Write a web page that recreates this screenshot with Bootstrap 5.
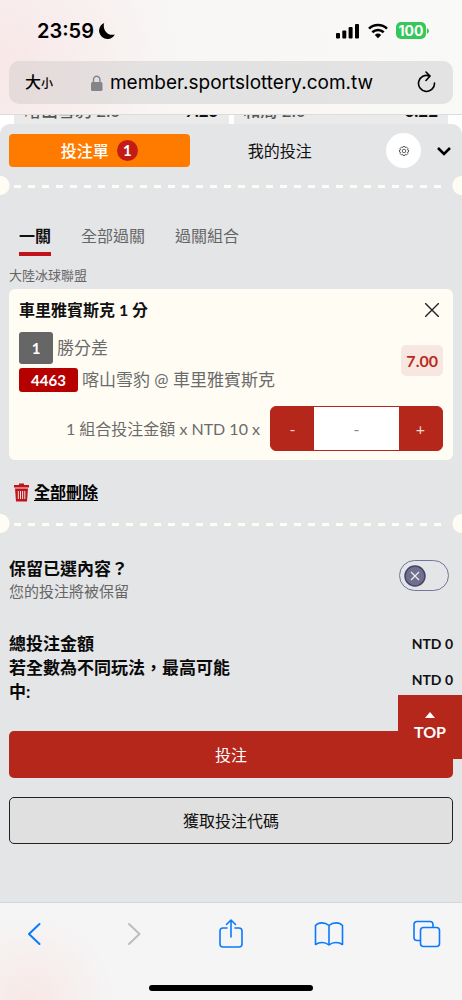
<!DOCTYPE html>
<html lang="zh-Hant">
<head>
<meta charset="utf-8">
<meta name="viewport" content="width=device-width, initial-scale=1">
<title>投注單</title>
<link rel="stylesheet" href="https://cdn.jsdelivr.net/npm/bootstrap@5.3.0/dist/css/bootstrap.min.css">
<style>
  :root { --cream:#fffdf3; --red:#b5261b; --gutter:9px; }
  body { font-family:Lato,"Noto Sans CJK TC",sans-serif; font-size:17px; line-height:24px; color:#111; background:#fff; }
  button, input { font-family:inherit; }
  svg { display:block; flex:none; }
  .bare { border:0; background:none; padding:0; color:inherit; }

  /* browser chrome */
  .chrome-top, .chrome-bottom { font-family:Inter,"Noto Sans CJK TC",sans-serif; color:#000; }
  .chrome-top { z-index:2; height:115px; border-bottom:1px solid #dcdcdc; background:radial-gradient(circle at 0 62px,#f8e7e7 0,#f8f6f5 170px,#f9f9f8 100%); }
  .status { height:61px; padding:0 33px 0 37px; }
  .clock { font-size:20px; font-weight:600; }
  .battery { width:30px; height:17px; border-radius:5px; background:#34c759; color:#fff; font-size:14px; font-weight:700; line-height:17px; }
  .address { height:43px; margin:0 var(--gutter); padding:0 16px; border-radius:10px; background:linear-gradient(90deg,#e6dada,#e3e2e2 35%,#e3e3e3); }
  .textsize { font-size:16px; font-weight:500; }
  .textsize small { font-size:12px; }
  .host { font-size:19px; }
  .address-text { gap:7px; margin-right:6px; }
  .chrome-bottom { height:98px; border-top:1px solid #d4d5d6; background:radial-gradient(circle at 30px 98px,#f8e8e6 0,#f5f5f5 85px); color:#0a7aff; }
  .toolbar { padding:15px 21px 0; }
  .home-bar { width:164px; height:6px; border-radius:3px; background:#000; margin-top:35px; }

  /* odds list scrolled under the header */
  .odds-peek { margin-top:-14px; padding:0 14px; gap:5px; height:36px; font-size:17px; }
  .odds-cell { background:#eaeaea; height:36px; padding:0 10px; color:#555; font-weight:500; line-height:20px; }
  .odds-cell b { color:#111; }

  .sheet { margin-top:-13px; background:#e4e5e7; border-radius:10px 10px 0 0; padding:9px var(--gutter) 0; z-index:1; }
  .slip-tab { flex:1 1 0; height:33px; border-radius:4px; font-size:16px; }
  .slip-tab.current { background:#ff7b00; color:#fff; font-weight:500; }
  .tally { width:21px; height:21px; line-height:21px; border-radius:50%; background:#c31c16; font-size:15px; font-weight:700; }
  .gear { width:35px; height:35px; border-radius:50%; background:#fff; }
  .perforation { height:19px; margin:0 calc(var(--gutter) * -1); background:
      radial-gradient(circle at 0 50%,var(--cream) 9px,transparent 10px),
      radial-gradient(circle at 100% 50%,var(--cream) 9px,transparent 10px),
      repeating-linear-gradient(90deg,var(--cream) 0 7px,transparent 7px 14px) 14px 9px / calc(100% - 28px) 3px no-repeat; }
  .modes { gap:30px; padding:28px 10px 0; font-size:16px; color:#666; }
  .modes button { height:33px; padding-bottom:3px; border-bottom:4px solid transparent; }
  .modes .current { color:#111; font-weight:700; border-color:#c0141a; }
  .league { font-size:13px; line-height:18px; color:#666; margin:10px 0 5px; }
  .bet { background:var(--cream); border-radius:6px; padding:9px 10px; color:#6b6b6b; }
  .bet h2 { font-size:16px; line-height:24px; font-weight:700; color:#111; }
  .picks { margin-top:10px; }
  .stake-row { padding-top:14px; font-size:16px; gap:10px; }
  .tag-pos, .tag-id { color:#fff; border-radius:3px; font-weight:700; text-align:center; font-size:15px; }
  .tag-pos { width:34px; line-height:32px; background:#666; }
  .tag-id { width:59px; line-height:24px; background:#b60000; }
  .price { line-height:31px; padding:0 5px; border-radius:5px; background:#f8e7e0; color:#b92a1e; font-size:16px; font-weight:700; }
  .stepper { width:173px; height:45px; border-radius:6px; background:var(--red); border:1px solid var(--red); }
  .stepper button { width:43px; color:#f3d5d0; }
  .stepper input { width:85px; border:0; text-align:center; background:#fff; color:#777; padding:0; font-size:16px; }
  .stepper input::placeholder { color:#888; }
  .wipe-row { gap:5px; padding-left:5px; margin-bottom:10px; }
  .wipe { color:#000; font-size:16px; font-weight:700; text-decoration:underline; text-underline-offset:2px; }
  .hint { font-size:15px; line-height:21px; color:#666; }
  .strong-text { font-weight:700; color:#0a0a0a; font-size:17px; }
  .keep { appearance:none; width:50px; height:31px; margin:0; border:1px solid #77749b; border-radius:16px; background:
      url("data:image/svg+xml,%3Csvg xmlns='http://www.w3.org/2000/svg' width='22' height='22'%3E%3Ccircle cx='11' cy='11' r='10' fill='%23706f8d' stroke='%2346436c' stroke-width='1.5'/%3E%3Cpath d='M7 7l8 8M15 7l-8 8' stroke='%23eee' stroke-width='1.2'/%3E%3C/svg%3E") 4px center no-repeat; }
  .keep:checked { background-color:#d8d7e6; background-position:22px center; }
  .totals { margin-top:30px; }
  .totals-label { width:52%; }
  .amount { font-size:14px; font-weight:700; }
  .actions { margin-top:27px; gap:19px; }
  .wide-btn { height:47px; border-radius:5px; font-size:16px; }
  .place { background:var(--red); color:#fff; }
  .code { background:#e0e0e0; border:1px solid #222; color:#111; }
  .to-top { top:-36px; right:-9px; width:64px; height:64px; background:var(--red); color:#fff; font-size:16px; font-weight:700; line-height:20px; }
</style>
</head>
<body class="d-flex flex-column min-vh-100">
  <header class="chrome-top position-relative">
    <div class="status d-flex align-items-center">
      <span class="clock">23:59</span>
      <svg class="ms-1" width="18" height="18" viewBox="0 0 18 18"><path d="M6.200 1A8.300 8.300 0 1 0 16.800 12.400C10.500 14.500 4 8.500 6.200 1z"/></svg>
      <span class="ms-auto d-flex align-items-center gap-2">
        <svg width="24" height="16" viewBox="0 0 24 16"><rect x="0" y="10" width="4" height="5.500" rx="1"/><rect x="6.300" y="7.500" width="4" height="8" rx="1"/><rect x="12.600" y="4" width="4" height="11.500" rx="1"/><rect x="19" y="1" width="4" height="14.500" rx="1"/></svg>
        <svg width="20" height="16" viewBox="0 0 20 16" fill="none" stroke="#000" stroke-width="2.600"><path d="M1 5.600a13 13 0 0 1 18 0M4.300 9.200a8.300 8.300 0 0 1 11.400 0"/><path d="M6.800 12.100a4.700 4.700 0 0 1 6.400 0L10 15.300z" fill="#000" stroke="none"/></svg>
        <span class="d-flex align-items-center"><span class="battery text-center">100</span><svg width="3" height="6"><path d="M1 0q4 3 0 6z" fill="#34c759"/></svg></span>
      </span>
    </div>
    <div class="address d-flex align-items-center justify-content-between">
      <button class="bare textsize" aria-label="文字大小">大<small>小</small></button>
      <span class="address-text d-flex align-items-center">
        <svg width="12" height="16" viewBox="0 0 12 16"><rect y="7" width="11.500" height="9" rx="1.500" fill="#858488"/><path d="M2.500 8V4.500a3.200 3.200 0 0 1 6.400 0V8" fill="none" stroke="#858488" stroke-width="1.400"/></svg>
        <span class="host">member.sportslottery.com.tw</span>
      </span>
      <button class="bare" aria-label="重新載入"><svg width="20" height="24" viewBox="0 0 20 24" fill="none" stroke="#000" stroke-width="1.600" stroke-linecap="round"><path d="M12.500 5A8 8 0 1 0 17.500 12M9 1l4 4-4 4.500"/></svg></button>
    </div>
  </header>

  <div class="odds-peek d-flex">
    <div class="odds-cell flex-fill w-50 d-flex justify-content-between"><span>喀山雪豹 2.0</span><b>7.25</b></div>
    <div class="odds-cell flex-fill w-50 d-flex justify-content-between"><span>和局 2.0</span><b>6.22</b></div>
  </div>

  <main class="sheet position-relative flex-grow-1">
    <nav class="d-flex align-items-center">
      <button class="bare slip-tab current d-flex align-items-center justify-content-center">投注單<span class="tally ms-2">1</span></button>
      <button class="bare slip-tab">我的投注</button>
      <button class="bare gear d-flex align-items-center justify-content-center ms-3" aria-label="設定">
        <svg width="10" height="10" viewBox="0 0 20 20" fill="none" stroke="#333" stroke-width="1.500"><circle cx="10" cy="10" r="3.500"/><path d="M8 1h4l.7 2.400 2.500-1.200 2.700 2.700-1.300 2.500L19 8v4l-2.400.7 1.200 2.500-2.700 2.700-2.400-1.300L12 19H8l-.7-2.400-2.500 1.200-2.700-2.700 1.300-2.400L1 12V8l2.400-.7L2.200 4.800l2.700-2.700 2.400 1.300z"/></svg>
      </button>
      <button class="bare ms-3" aria-label="收合"><svg width="16" height="10" viewBox="0 0 16 10" fill="none" stroke="#000" stroke-width="2.600"><path d="M1 2l6 6 6-6"/></svg></button>
    </nav>
    <div class="perforation mt-2"></div>

    <div class="modes d-flex">
      <button class="bare current">一關</button>
      <button class="bare">全部過關</button>
      <button class="bare">過關組合</button>
    </div>

    <p class="league">大陸冰球聯盟</p>
    <article class="bet">
      <div class="d-flex justify-content-between align-items-center">
        <h2 class="m-0">車里雅賓斯克 1 分</h2>
        <button class="bare pe-1" aria-label="移除"><svg width="14" height="14" viewBox="0 0 14 14" stroke="#222" stroke-width="1.400"><path d="M0 0l14 14M14 0L0 14"/></svg></button>
      </div>
      <div class="picks d-flex justify-content-between align-items-center">
        <div class="d-flex flex-column gap-1">
          <div class="d-flex align-items-center gap-1"><span class="tag-pos">1</span><span>勝分差</span></div>
          <div class="d-flex align-items-center gap-1"><span class="tag-id">4463</span><span>喀山雪豹 @ 車里雅賓斯克</span></div>
        </div>
        <span class="price mb-1">7.00</span>
      </div>
      <div class="stake-row d-flex justify-content-end align-items-center">
        <label for="stake">1 組合投注金額 x NTD 10 x</label>
        <div class="stepper d-flex overflow-hidden">
          <button class="bare" aria-label="減少">-</button>
          <input id="stake" type="text" inputmode="numeric" placeholder="-">
          <button class="bare" aria-label="增加">+</button>
        </div>
      </div>
    </article>

    <div class="wipe-row d-flex align-items-center mt-3 pt-1">
      <svg width="15" height="19" viewBox="0 0 15 19"><path d="M5 2V.5h5V2h5v2.500H0V2z" fill="#c0141a"/><path d="M1 5.500h13L13 18.500H2z" fill="#c0141a"/><path d="M4.300 8v8M6.500 8v8M8.600 8v8M10.800 8v8" stroke="#e4e5e7" stroke-width="1"/></svg>
      <a href="#" class="wipe">全部刪除</a>
    </div>
    <div class="perforation"></div>

    <div class="d-flex justify-content-between align-items-center mt-4">
      <label for="keep" class="d-flex flex-column"><span class="strong-text">保留已選內容？</span><span class="hint">您的投注將被保留</span></label>
      <input id="keep" class="keep mb-2 me-1" type="checkbox" role="switch">
    </div>

    <div class="totals d-flex justify-content-between">
      <div class="strong-text totals-label">總投注金額<br>若全數為不同玩法，最高可能中:</div>
      <div class="amount d-flex flex-column text-end"><span>NTD 0</span><span class="mt-2 pt-1">NTD 0</span></div>
    </div>

    <div class="actions position-relative d-grid">
      <button class="bare wide-btn place">投注</button>
      <button class="bare wide-btn code">獲取投注代碼</button>
      <button class="bare to-top position-absolute d-flex flex-column align-items-center justify-content-center" aria-label="回到頂端">
        <svg class="mb-1" width="10" height="6"><path d="M0 6l5-6 5 6z" fill="#fff"/></svg>TOP
      </button>
    </div>
  </main>

  <footer class="chrome-bottom">
    <div class="toolbar d-flex justify-content-between align-items-center">
      <button class="bare" aria-label="上一頁"><svg width="28" height="32" viewBox="0 0 28 32" fill="none" stroke="#0a7aff" stroke-width="2" stroke-linecap="round" stroke-linejoin="round"><path d="M18.500 6L8 16l10.500 10"/></svg></button>
      <button class="bare" aria-label="下一頁"><svg width="28" height="32" viewBox="0 0 28 32" fill="none" stroke="#bdbdbd" stroke-width="2" stroke-linecap="round" stroke-linejoin="round"><path d="M10 6l10.500 10L10 26"/></svg></button>
      <button class="bare" aria-label="分享"><svg width="28" height="32" viewBox="0 0 28 32" fill="none" stroke="#0a7aff" stroke-width="1.600" stroke-linecap="round" stroke-linejoin="round"><path d="M11 10H7a3 3 0 0 0-3 3v13a3 3 0 0 0 3 3h16a3 3 0 0 0 3-3V13a3 3 0 0 0-3-3h-4M15 19V2M10.500 6.500L15 2l4.500 4.500"/></svg></button>
      <button class="bare" aria-label="書籤"><svg width="30" height="32" viewBox="0 0 30 32" fill="none" stroke="#0a7aff" stroke-width="1.600" stroke-linejoin="round"><path d="M15 7.500C11 4 4.500 4 1.500 7.500V26.500C5 24 11 23.500 15 27c4-3.500 10-3 13.500-.5V7.500C25.500 4 19 4 15 7.500zM15 7.500V27"/></svg></button>
      <button class="bare" aria-label="分頁"><svg width="28" height="32" viewBox="0 0 28 32" fill="none" stroke="#0a7aff" stroke-width="1.600"><rect x="7.500" y="9.500" width="19" height="19" rx="3"/><path d="M7.500 22.500H4a3 3 0 0 1-3-3V6.500a3 3 0 0 1 3-3h13a3 3 0 0 1 3 3v3"/></svg></button>
    </div>
    <div class="home-bar mx-auto"></div>
  </footer>
<script src="https://cdn.jsdelivr.net/npm/bootstrap@5.3.0/dist/js/bootstrap.bundle.min.js"></script>
</body>
</html>
